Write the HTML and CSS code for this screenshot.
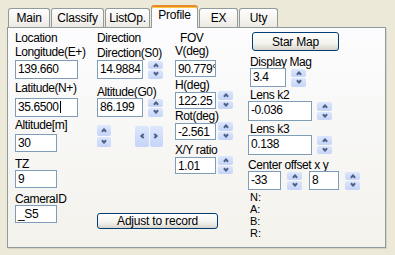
FILE: index.html
```html
<!DOCTYPE html>
<html lang="en">
<head>
    <meta charset="UTF-8">
    <title>Profile</title>
    <link rel="stylesheet" href="styles.css">
</head>
<body>
<div class="window">
    <div class="tabs">
        <div class="tab tab-main">Main</div>
        <div class="tab tab-classify">Classify</div>
        <div class="tab tab-listop">ListOp.</div>
        <div class="tab tab-profile active">Profile</div>
        <div class="tab tab-ex">EX</div>
        <div class="tab tab-uty">Uty</div>
    </div>

    <div class="panel">
        <!-- location -->
        <div class="col col-loc">
            <div class="lbl">Location</div>
            <div class="lbl mt2">Longitude(E+)</div>
            <div class="edit wide mt2">139.660</div>
            <div class="lbl mt3">Latitude(N+)</div>
            <div class="edit wide mt4">35.6500<span class="caret"></span></div>
            <div class="lbl mt2">Altitude[m]</div>
            <div class="edit short mt3">30</div>
            <div class="lbl mt6">TZ</div>
            <div class="edit short">9</div>
            <div class="lbl mt5">CameraID</div>
            <div class="edit short">_S5</div>
        </div>

        <!-- direction -->
        <div class="col col-dir">
            <div class="lbl">Direction</div>
            <div class="lbl mt3">Direction(S0)</div>
            <div class="row mt1">
                <div class="edit dir-edit">14.9884</div>
                <div class="spin"><span class="up"></span><span class="down"></span></div>
            </div>
            <div class="lbl mt7">Altitude(G0)</div>
            <div class="row">
                <div class="edit dir-edit">86.199</div>
                <div class="spin"><span class="up"></span><span class="down"></span></div>
            </div>
            <div class="row mt8">
                <div class="spin spin-tall"><span class="up"></span><span class="down"></span></div>
                <div class="spin-h"><span class="left"></span><span class="right"></span></div>
            </div>
            <button class="btn btn-adjust">Adjust to record</button>
        </div>

        <!-- fov -->
        <div class="col col-fov">
            <div class="lbl fov-title">FOV</div>
            <div class="lbl mt1">V(deg)</div>
            <div class="edit fov-edit mt3">90.779°</div>
            <div class="lbl mt2">H(deg)</div>
            <div class="row">
                <div class="edit fov-edit">122.25</div>
                <div class="spin"><span class="up"></span><span class="down"></span></div>
            </div>
            <div class="lbl mt1">Rot(deg)</div>
            <div class="row">
                <div class="edit fov-edit">-2.561</div>
                <div class="spin"><span class="up"></span><span class="down"></span></div>
            </div>
            <div class="lbl mt4">X/Y ratio</div>
            <div class="row">
                <div class="edit fov-edit">1.01</div>
                <div class="spin"><span class="up"></span><span class="down"></span></div>
            </div>
        </div>

        <!-- display -->
        <div class="col col-disp">
            <button class="btn btn-star">Star Map</button>
            <div class="lbl ind2 mt5">Display Mag</div>
            <div class="row ind2">
                <div class="edit mag-edit">3.4</div>
                <div class="spin"><span class="up"></span><span class="down"></span></div>
            </div>
            <div class="lbl ind2 mt2">Lens k2</div>
            <div class="row">
                <div class="edit lens-edit">-0.036</div>
                <div class="spin"><span class="up"></span><span class="down"></span></div>
            </div>
            <div class="lbl ind2 mt2">Lens k3</div>
            <div class="row">
                <div class="edit lens-edit">0.138</div>
                <div class="spin"><span class="up"></span><span class="down"></span></div>
            </div>
            <div class="lbl mt4">Center offset x y</div>
            <div class="row">
                <div class="edit off-edit">-33</div>
                <div class="spin"><span class="up"></span><span class="down"></span></div>
                <div class="edit off-edit off-y">8</div>
                <div class="spin"><span class="up"></span><span class="down"></span></div>
            </div>
            <div class="nabr">N:<br>A:<br>B:<br>R:</div>
        </div>
    </div>
</div>
</body>
</html>
```

FILE: styles.css
```css
body {
    margin: 0;
    width: 395px;
    height: 255px;
    overflow: hidden;
    background-color: #ece9d8;
    font-family: "Liberation Sans", Arial, sans-serif;
    font-size: 12px;
    color: #000;
}
.window {
    padding: 5px 0 0 7px;
}

/* tab strip */
.tabs {
    display: flex;
    align-items: flex-end;
    height: 22px;
    padding-left: 1px;
    position: relative;
    z-index: 1;
}
.tab {
    box-sizing: border-box;
    height: 19px;
    margin-right: 1px;
    border: 1px solid #919b9c;
    border-bottom: none;
    border-radius: 3px 3px 0 0;
    background: linear-gradient(#ffffff, #eceae3);
    text-align: center;
    line-height: 18px;
    letter-spacing: -0.2px;
}
.tab-main { width: 42px; }
.tab-classify { width: 53px; }
.tab-listop { width: 45px; }
.tab-profile { width: 47px; }
.tab-ex { width: 39px; }
.tab-uty { width: 39px; }
.tab.active {
    height: 23px;
    margin-bottom: -1px;
    border-top: 2px solid #e68b2c;
    box-shadow: inset 0 1px 0 #ffc73c;
    background: #fcfcfe;
    line-height: 16px;
}

/* page */
.panel {
    box-sizing: border-box;
    width: 379px;
    height: 221px;
    display: flex;
    padding: 4px 0 0 7px;
    border: 1px solid #919b9c;
    background: linear-gradient(#fcfcfe, #f3f2ec);
    box-shadow: 1px 1px 0 #d5d2c4;
}
.col {
    display: flex;
    flex-direction: column;
    align-items: flex-start;
}
.col-loc { width: 82px; }
.col-dir { width: 78px; }
.col-fov { width: 73px; }
.col-disp { flex: 1; }

.lbl {
    line-height: 12px;
    height: 12px;
    white-space: nowrap;
    letter-spacing: -0.4px;
}
.row {
    display: flex;
    align-items: center;
}
.mt1 { margin-top: 1px; }
.mt2 { margin-top: 2px; }
.mt3 { margin-top: 3px; }
.mt4 { margin-top: 4px; }
.mt5 { margin-top: 5px; }
.mt6 { margin-top: 6px; }
.mt7 { margin-top: 7px; }
.mt8 { margin-top: 8px; }
.ind2 { margin-left: 2px; }

/* edit boxes */
.edit {
    box-sizing: border-box;
    height: 18px;
    padding-left: 2px;
    border: 1px solid #7f9db9;
    background-color: #fff;
    line-height: 16px;
    letter-spacing: -0.4px;
    white-space: nowrap;
    overflow: hidden;
}
.wide { width: 63px; height: 19px; }
.short { width: 42px; }
.caret {
    display: inline-block;
    width: 1px;
    height: 12px;
    margin-left: 1px;
    vertical-align: -2px;
    background-color: #000;
}
.dir-edit { width: 46px; height: 19px; }
.fov-edit { width: 41px; height: 17px; }
.mag-edit { width: 36px; height: 19px; }
.lens-edit { width: 64px; height: 20px; }
.off-edit { width: 33px; height: 19px; }
.off-y { width: 30px; margin-left: 7px; }

/* spin buttons */
.spin {
    display: flex;
    flex-direction: column;
    gap: 1px;
    width: 15px;
    height: 18px;
    margin-left: 5px;
}
.col-fov .spin { margin-left: 2px; }
.off-edit + .spin { margin-left: 6px; }
.spin span, .spin-h span {
    flex: 1;
    border-radius: 2px;
    background: linear-gradient(#dde7fd, #c5d4f8);
    position: relative;
}
.spin span::after, .spin-h span::after {
    content: "";
    position: absolute;
    left: 50%;
    top: 50%;
    width: 4px;
    height: 4px;
    border-left: 2px solid #4d6185;
    border-top: 2px solid #4d6185;
    box-sizing: border-box;
}
.spin .up::after { transform: translate(-50%, -25%) rotate(45deg); }
.spin .down::after { transform: translate(-50%, -75%) rotate(225deg); }
.spin-tall {
    width: 14px;
    height: 22px;
    margin-left: 0;
}
.spin-h {
    display: flex;
    gap: 1px;
    width: 28px;
    height: 21px;
    margin-left: 24px;
}
.spin-h .left::after { transform: translate(-25%, -50%) rotate(-45deg); }
.spin-h .right::after { transform: translate(-75%, -50%) rotate(135deg); }

/* buttons */
.btn {
    box-sizing: border-box;
    padding: 0;
    border: 1px solid #003c74;
    border-radius: 3px;
    background: linear-gradient(#ffffff 0%, #f3f2ee 60%, #d9d5cb 100%);
    font-family: inherit;
    font-size: 12px;
    color: #000;
    letter-spacing: -0.2px;
}
.btn-star {
    width: 87px;
    height: 19px;
    margin-left: 4px;
}
.btn-adjust {
    width: 121px;
    height: 16px;
    margin-top: 66px;
    line-height: 13px;
    flex-shrink: 0;
}
.fov-title { margin-left: 5px; }

.nabr {
    margin: 1px 0 0 2px;
    line-height: 12px;
    font-size: 11px;
}
```
